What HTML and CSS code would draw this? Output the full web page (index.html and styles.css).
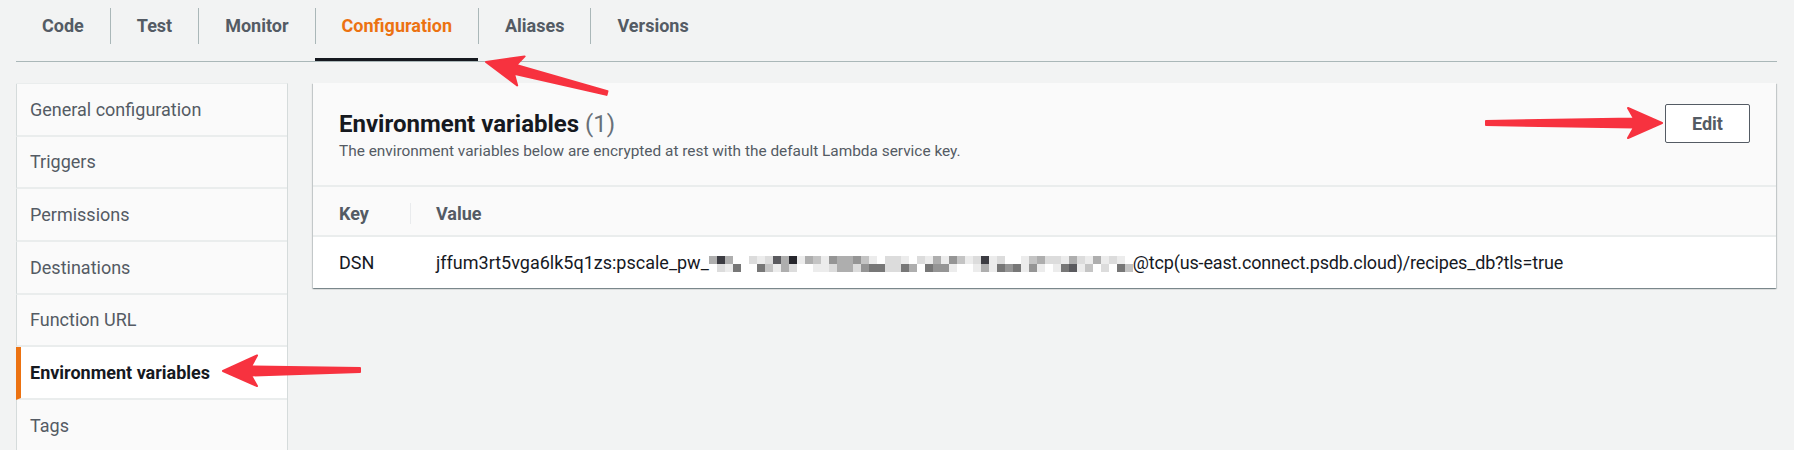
FILE: index.html
```html
<!DOCTYPE html>
<html>
<head>
<meta charset="utf-8">
<link rel="stylesheet" href="styles.css">
</head>
<body>
<nav class="tabs">
  <div class="tab"><span class="tab-label">Code</span></div>
  <div class="tab"><span class="tab-label">Test</span></div>
  <div class="tab"><span class="tab-label">Monitor</span></div>
  <div class="tab active"><span class="tab-label">Configuration</span></div>
  <div class="tab"><span class="tab-label">Aliases</span></div>
  <div class="tab"><span class="tab-label">Versions</span></div>
</nav>
<div class="layout">
  <aside class="sidebar">
    <div class="nav-item">General configuration</div>
    <div class="nav-item">Triggers</div>
    <div class="nav-item">Permissions</div>
    <div class="nav-item">Destinations</div>
    <div class="nav-item">Function URL</div>
    <div class="nav-item active">Environment variables</div>
    <div class="nav-item">Tags</div>
    <div class="nav-rest"></div>
  </aside>
  <section class="panel">
    <header class="panel-header">
      <div class="heading">
        <div class="title">Environment variables <span class="count">(1)</span></div>
        <div class="desc">The environment variables below are encrypted at rest with the default Lambda service key.</div>
      </div>
      <button class="edit-btn">Edit</button>
    </header>
    <div class="thead">
      <div class="key">Key</div>
      <div class="val">Value</div>
    </div>
    <div class="trow">
      <div class="key">DSN</div>
      <div class="val">jffum3rt5vga6lk5q1zs:pscale_pw_<svg class="pixels" width="424" height="16" viewBox="0 0 424 16"><rect class="p4" x="0" y="0" width="8" height="8"/><rect class="p8" x="8" y="0" width="8" height="8"/><rect class="p4" x="16" y="0" width="8" height="8"/><rect class="p2" x="40" y="0" width="8" height="8"/><rect class="p1" x="48" y="0" width="8" height="8"/><rect class="p2" x="56" y="0" width="8" height="8"/><rect class="p7" x="64" y="0" width="8" height="8"/><rect class="p4" x="72" y="0" width="8" height="8"/><rect class="p9" x="80" y="0" width="8" height="8"/><rect class="p1" x="88" y="0" width="8" height="8"/><rect class="p4" x="96" y="0" width="8" height="8"/><rect class="p3" x="104" y="0" width="8" height="8"/><rect class="p1" x="112" y="0" width="8" height="8"/><rect class="p5" x="120" y="0" width="8" height="8"/><rect class="p4" x="128" y="0" width="8" height="8"/><rect class="p4" x="136" y="0" width="8" height="8"/><rect class="p5" x="144" y="0" width="8" height="8"/><rect class="p3" x="152" y="0" width="8" height="8"/><rect class="p1" x="160" y="0" width="8" height="8"/><rect class="p2" x="176" y="0" width="8" height="8"/><rect class="p2" x="184" y="0" width="8" height="8"/><rect class="p1" x="192" y="0" width="8" height="8"/><rect class="p2" x="208" y="0" width="8" height="8"/><rect class="p1" x="216" y="0" width="8" height="8"/><rect class="p4" x="224" y="0" width="8" height="8"/><rect class="p1" x="232" y="0" width="8" height="8"/><rect class="p5" x="240" y="0" width="8" height="8"/><rect class="p3" x="248" y="0" width="8" height="8"/><rect class="p1" x="256" y="0" width="8" height="8"/><rect class="p2" x="264" y="0" width="8" height="8"/><rect class="p8" x="272" y="0" width="8" height="8"/><rect class="p1" x="280" y="0" width="8" height="8"/><rect class="p2" x="288" y="0" width="8" height="8"/><rect class="p1" x="312" y="0" width="8" height="8"/><rect class="p3" x="320" y="0" width="8" height="8"/><rect class="p4" x="328" y="0" width="8" height="8"/><rect class="p2" x="336" y="0" width="8" height="8"/><rect class="p2" x="344" y="0" width="8" height="8"/><rect class="p1" x="352" y="0" width="8" height="8"/><rect class="p4" x="360" y="0" width="8" height="8"/><rect class="p2" x="368" y="0" width="8" height="8"/><rect class="p1" x="376" y="0" width="8" height="8"/><rect class="p4" x="384" y="0" width="8" height="8"/><rect class="p1" x="392" y="0" width="8" height="8"/><rect class="p2" x="400" y="0" width="8" height="8"/><rect class="p1" x="408" y="0" width="8" height="8"/><rect class="p2" x="8" y="8" width="8" height="8"/><rect class="p1" x="16" y="8" width="8" height="8"/><rect class="p6" x="24" y="8" width="8" height="8"/><rect class="p6" x="48" y="8" width="8" height="8"/><rect class="p3" x="56" y="8" width="8" height="8"/><rect class="p1" x="64" y="8" width="8" height="8"/><rect class="p4" x="72" y="8" width="8" height="8"/><rect class="p2" x="80" y="8" width="8" height="8"/><rect class="p1" x="104" y="8" width="8" height="8"/><rect class="p1" x="112" y="8" width="8" height="8"/><rect class="p2" x="120" y="8" width="8" height="8"/><rect class="p4" x="128" y="8" width="8" height="8"/><rect class="p4" x="136" y="8" width="8" height="8"/><rect class="p2" x="144" y="8" width="8" height="8"/><rect class="p5" x="152" y="8" width="8" height="8"/><rect class="p6" x="160" y="8" width="8" height="8"/><rect class="p6" x="168" y="8" width="8" height="8"/><rect class="p2" x="176" y="8" width="8" height="8"/><rect class="p2" x="184" y="8" width="8" height="8"/><rect class="p6" x="192" y="8" width="8" height="8"/><rect class="p4" x="200" y="8" width="8" height="8"/><rect class="p6" x="216" y="8" width="8" height="8"/><rect class="p5" x="224" y="8" width="8" height="8"/><rect class="p5" x="232" y="8" width="8" height="8"/><rect class="p1" x="240" y="8" width="8" height="8"/><rect class="p1" x="264" y="8" width="8" height="8"/><rect class="p4" x="272" y="8" width="8" height="8"/><rect class="p1" x="280" y="8" width="8" height="8"/><rect class="p6" x="288" y="8" width="8" height="8"/><rect class="p5" x="296" y="8" width="8" height="8"/><rect class="p6" x="304" y="8" width="8" height="8"/><rect class="p1" x="312" y="8" width="8" height="8"/><rect class="p5" x="320" y="8" width="8" height="8"/><rect class="p1" x="328" y="8" width="8" height="8"/><rect class="p1" x="344" y="8" width="8" height="8"/><rect class="p6" x="352" y="8" width="8" height="8"/><rect class="p7" x="360" y="8" width="8" height="8"/><rect class="p1" x="368" y="8" width="8" height="8"/><rect class="p3" x="376" y="8" width="8" height="8"/><rect class="p2" x="392" y="8" width="8" height="8"/><rect class="p6" x="408" y="8" width="8" height="8"/><rect class="p3" x="416" y="8" width="8" height="8"/></svg><span class="tail">@tcp(us-east.connect.psdb.cloud)/recipes_db?tls=true</span></div>
    </div>
  </section>
</div>
<svg class="annotations" width="1794" height="450" viewBox="0 0 1794 450">
  <polygon class="arrow" points="607.5,91.1 516.2,65.0 524.6,56.4 486,62 517.2,85.4 514.0,73.8 606.5,94.9"/>
  <polygon class="arrow" points="1486,121 1634,118.5 1628,108 1662,123 1628,138 1634,127.5 1486,125"/>
  <polygon class="arrow" points="360,368 251,366.5 257,355.5 223,371 257,386 251,375.5 360,372"/>
</svg>
</body>
</html>
```
FILE: styles.css
```css
body {
  margin: 0;
  width: 1794px;
  height: 450px;
  overflow: hidden;
  position: relative;
  background: #f2f3f3;
  font-family: Roboto, "Liberation Sans", sans-serif;
}

.tabs {
  display: flex;
  height: 61px;
  margin: 0 17px 0 16px;
  border-bottom: 1px solid #aab7b8;
}

.tab {
  box-sizing: border-box;
  height: 61px;
  padding-top: 8px;
  font-size: 18px;
  font-weight: 700;
  color: #545b64;
}

.tab-label {
  display: block;
  height: 36px;
  line-height: 36px;
  padding: 0 26px;
  border-left: 1px solid #aab7b8;
}

.tab:first-child .tab-label {
  border-left: none;
}

.tab.active {
  color: #ec7211;
  border-bottom: 3px solid #16191f;
}

.layout {
  display: flex;
  align-items: flex-start;
  gap: 25px;
  padding: 21px 18px 0 16px;
}

.sidebar {
  flex: none;
  width: 272px;
  box-sizing: border-box;
  background: #fafafa;
  border-top: 1px solid #eaeded;
  border-right: 1px solid #d5dbdb;
}

.nav-item {
  display: flex;
  align-items: center;
  height: 50.67px;
  padding-left: 13px;
  border-left: 1px solid #d5dbdb;
  border-bottom: 2px solid #eaeded;
  font-size: 18px;
  color: #545b64;
}

.nav-item.active {
  background: #fff;
  border-left: 5px solid #ec7211;
  padding-left: 9px;
  font-weight: 700;
  color: #16191f;
}

.nav-rest {
  height: 40px;
  border-left: 1px solid #d5dbdb;
}

.panel {
  flex: 1;
  background: #fff;
  box-shadow: 0 1px 1px 0 rgba(0, 28, 36, 0.3), 1px 1px 1px 0 rgba(0, 28, 36, 0.15), -1px 1px 1px 0 rgba(0, 28, 36, 0.15);
}

.panel-header {
  display: flex;
  justify-content: space-between;
  align-items: flex-start;
  height: 81px;
  padding: 21px 26px 0;
  background: #fafafa;
  border-bottom: 2px solid #eaeded;
}

.title {
  margin-top: 5.8px;
  font-size: 24px;
  line-height: 28px;
  font-weight: 700;
  color: #16191f;
}

.count {
  font-weight: 400;
  color: #687078;
}

.desc {
  margin-top: 3px;
  font-size: 15.4px;
  line-height: 20px;
  color: #545b64;
}

.edit-btn {
  display: flex;
  align-items: center;
  justify-content: center;
  width: 85px;
  height: 39px;
  box-sizing: border-box;
  border: 1px solid #545b64;
  border-radius: 2px;
  background: #fff;
  font-family: inherit;
  font-size: 18px;
  font-weight: 700;
  color: #545b64;
  padding: 0;
}

.thead {
  display: flex;
  align-items: center;
  box-sizing: border-box;
  height: 50px;
  padding-top: 4px;
  background: #fafafa;
  border-bottom: 2px solid #eaeded;
  font-size: 18px;
  font-weight: 700;
  color: #545b64;
}

.key {
  flex: none;
  width: 97px;
  box-sizing: border-box;
  padding-left: 26px;
}

.thead .val {
  line-height: 21px;
  padding-left: 25px;
  border-left: 1px solid #e9ebed;
}

.trow {
  display: flex;
  align-items: center;
  height: 51px;
  font-size: 18px;
  color: #16191f;
}

.trow .val {
  padding-left: 26px;
  white-space: nowrap;
}

.tail {
  letter-spacing: -0.16px;
}

.pixels {
  vertical-align: -3px;
}

.p1 { fill: #ececec; }
.p2 { fill: #dcdcdc; }
.p3 { fill: #c4c4c4; }
.p4 { fill: #aeaeae; }
.p5 { fill: #959595; }
.p6 { fill: #777777; }
.p7 { fill: #5a5a5e; }
.p8 { fill: #3c3c42; }
.p9 { fill: #26262c; }

.annotations {
  position: absolute;
  top: 0;
  left: 0;
  pointer-events: none;
}

.arrow {
  fill: #f7323f;
  stroke: #f7323f;
  stroke-width: 2;
  stroke-linejoin: round;
}
```
